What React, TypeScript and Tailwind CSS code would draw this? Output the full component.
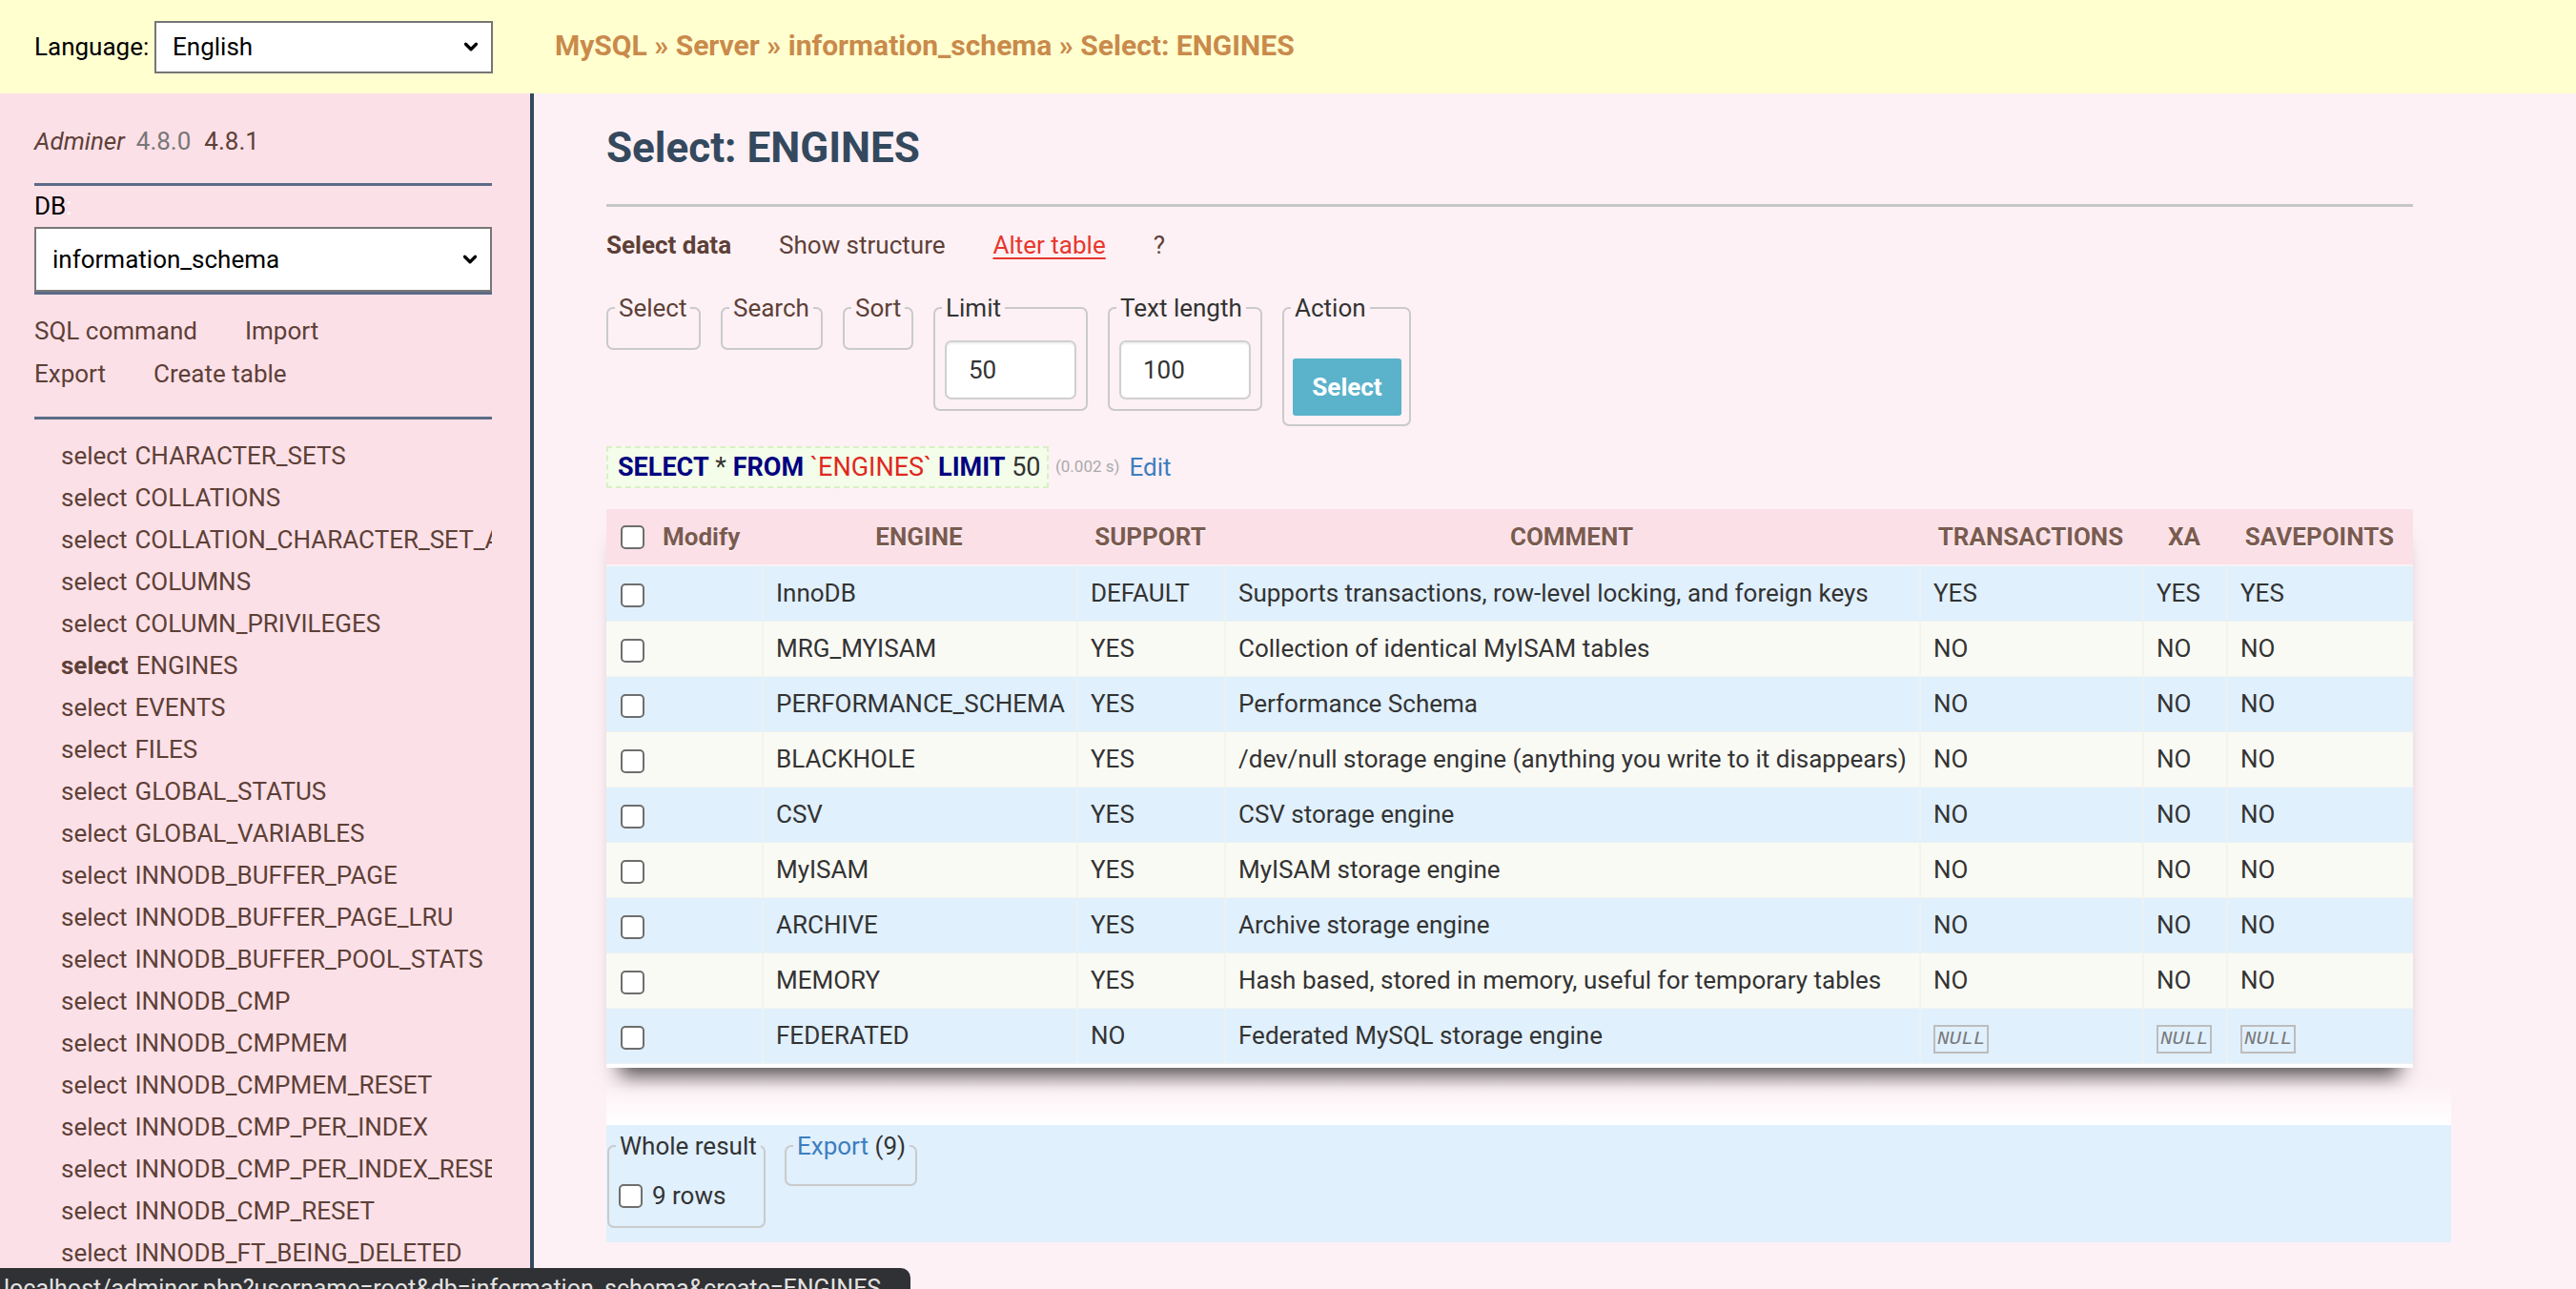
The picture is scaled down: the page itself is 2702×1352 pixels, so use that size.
import { ChevronDown } from 'lucide-react'

const tables = [
  'CHARACTER_SETS', 'COLLATIONS', 'COLLATION_CHARACTER_SET_APPLICABILITY', 'COLUMNS', 'COLUMN_PRIVILEGES',
  'ENGINES', 'EVENTS', 'FILES', 'GLOBAL_STATUS', 'GLOBAL_VARIABLES', 'INNODB_BUFFER_PAGE',
  'INNODB_BUFFER_PAGE_LRU', 'INNODB_BUFFER_POOL_STATS', 'INNODB_CMP', 'INNODB_CMPMEM',
  'INNODB_CMPMEM_RESET', 'INNODB_CMP_PER_INDEX', 'INNODB_CMP_PER_INDEX_RESET', 'INNODB_CMP_RESET',
  'INNODB_FT_BEING_DELETED', 'INNODB_FT_CONFIG', 'INNODB_FT_DEFAULT_STOPWORD',
]

type Row = [string, string, string, string | null, string | null, string | null]

const rows: Row[] = [
  ['InnoDB', 'DEFAULT', 'Supports transactions, row-level locking, and foreign keys', 'YES', 'YES', 'YES'],
  ['MRG_MYISAM', 'YES', 'Collection of identical MyISAM tables', 'NO', 'NO', 'NO'],
  ['PERFORMANCE_SCHEMA', 'YES', 'Performance Schema', 'NO', 'NO', 'NO'],
  ['BLACKHOLE', 'YES', '/dev/null storage engine (anything you write to it disappears)', 'NO', 'NO', 'NO'],
  ['CSV', 'YES', 'CSV storage engine', 'NO', 'NO', 'NO'],
  ['MyISAM', 'YES', 'MyISAM storage engine', 'NO', 'NO', 'NO'],
  ['ARCHIVE', 'YES', 'Archive storage engine', 'NO', 'NO', 'NO'],
  ['MEMORY', 'YES', 'Hash based, stored in memory, useful for temporary tables', 'NO', 'NO', 'NO'],
  ['FEDERATED', 'NO', 'Federated MySQL storage engine', null, null, null],
]

const cols = ['ENGINE', 'SUPPORT', 'COMMENT', 'TRANSACTIONS', 'XA', 'SAVEPOINTS']

function Checkbox() {
  return <span className="inline-block w-[25px] h-[25px] rounded-[5px] border-2 border-[#6e6e6e] bg-white align-middle shrink-0" />
}

function Box({ legend, className, children }: { legend: React.ReactNode; className: string; children?: React.ReactNode }) {
  return (
    <fieldset className={`border-2 border-[#cacaca] rounded-[7px] ${className}`}>
      <legend className="ml-[7px] px-[4px] leading-[30px]">{legend}</legend>
      {children}
    </fieldset>
  )
}

function Null() {
  return (
    <i className="inline-block border-2 border-[#bdbdbd] px-[2px] font-['Liberation_Mono',monospace] text-[21px] leading-[26px] text-[#7a7a7a]">
      NULL
    </i>
  )
}

export default function App() {
  return (
    <div className="relative w-[2702px] h-[1352px] overflow-hidden bg-[#fdf1f5] font-['Roboto','Liberation_Sans',sans-serif] text-[26px] text-[#333]">
      {/* top bar */}
      <div className="h-[98px] bg-[#ffffd0] flex items-center">
        <span className="ml-[36px] w-[126px] text-black">Language:</span>
        <div className="w-[355px] h-[55px] border-2 border-[#767676] bg-white flex items-center justify-between pl-[17px] pr-[10px] text-black">
          English
          <ChevronDown size={22} strokeWidth={3.5} />
        </div>
        <p className="ml-[65px] mb-[4px] font-bold text-[30px] text-[#c98a4b]">
          MySQL » Server » information_schema » Select: ENGINES
        </p>
      </div>

      <div className="flex h-[1254px]">
        {/* sidebar */}
        <aside className="w-[560px] shrink-0 bg-[#fce0e7] border-r-4 border-[#34495e] pl-[36px] pr-[40px] text-[#5d4037] overflow-hidden">
          <p className="mt-[35px] leading-[30px]">
            <i>Adminer</i>
            <span className="ml-[12px] text-[#777]">4.8.0</span>
            <span className="ml-[14px]">4.8.1</span>
          </p>
          <div className="mt-[29px] border-t-[3px] border-[#5b6b87]" />
          <p className="mt-[6px] leading-[30px] text-black">DB<span className="text-white">:</span></p>
          <div className="mt-[7px] h-[66px] border-2 border-[#777] border-b-0 bg-white flex items-center justify-between pl-[17px] pr-[10px] text-black shadow-[0_2px_0_#777,0_5px_0_#5b6b87]">
            information_schema
            <ChevronDown size={22} strokeWidth={3.5} />
          </div>
          <div className="mt-[21px] leading-[45px]">
            <p><span>SQL command</span><span className="ml-[50px]">Import</span></p>
            <p><span>Export</span><span className="ml-[50px]">Create table</span></p>
          </div>
          <div className="mt-[22px] border-t-[3px] border-[#5b6b87]" />
          <ul className="mt-[16px] pl-[28px]">
            {tables.map(t => (
              <li key={t} className="leading-[44px] whitespace-nowrap overflow-hidden">
                <span className={t === 'ENGINES' ? 'font-bold' : ''}>select</span>
                <span className="ml-[8px]">{t}</span>
              </li>
            ))}
          </ul>
        </aside>

        {/* main */}
        <main className="flex-1 pl-[76px] pr-[171px]">
          <h2 className="mt-[33px] leading-[48px] text-[44px] font-bold text-[#34495e]">Select: ENGINES</h2>
          <div className="mt-[35px] border-t-[3px] border-[#c6c6c6]" />

          <nav className="mt-[18px] flex gap-[50px] leading-[44px] text-[#5d4037]">
            <span className="font-bold">Select data</span>
            <span>Show structure</span>
            <span className="text-[#e8372c] underline decoration-2 underline-offset-4">Alter table</span>
            <span>?</span>
          </nav>

          <div className="mt-[29px] flex items-start gap-[21px]">
            <Box legend={<span className="text-[#5d4037]">Select</span>} className="w-[99px] h-[59px]" />
            <Box legend={<span className="text-[#5d4037]">Search</span>} className="w-[107px] h-[59px]" />
            <Box legend={<span className="text-[#5d4037]">Sort</span>} className="w-[74px] h-[59px]" />
            <Box legend="Limit" className="w-[162px] h-[123px]">
              <div className="mt-[19px] mx-[10px] h-[62px] rounded-[7px] border-2 border-[#d0d0d0] bg-white shadow-[inset_0_2px_2px_rgba(0,0,0,0.06)] pl-[23px] flex items-center">50</div>
            </Box>
            <Box legend="Text length" className="w-[162px] h-[123px]">
              <div className="mt-[19px] mx-[10px] h-[62px] rounded-[7px] border-2 border-[#d0d0d0] bg-white shadow-[inset_0_2px_2px_rgba(0,0,0,0.06)] pl-[23px] flex items-center">100</div>
            </Box>
            <Box legend="Action" className="w-[135px] h-[139px]">
              <div className="mt-[38px] ml-[9px] w-[114px] h-[60px] rounded-[3px] bg-[#5bb2cb] text-white font-bold flex items-center justify-center">Select</div>
            </Box>
          </div>

          <div className="mt-[21px] flex items-center">
            <code className="h-[44px] w-[464px] border-2 border-dashed border-[#d9efc4] bg-[#f3fde9] pl-[10px] flex items-center font-['Roboto',sans-serif] text-[27px] text-[#333]">
              <b className="text-[#000080]">SELECT</b>&nbsp;*&nbsp;<b className="text-[#000080]">FROM</b>&nbsp;<span className="text-[#e0281f]">`ENGINES`</span>&nbsp;<b className="text-[#000080]">LIMIT</b>&nbsp;50
            </code>
            <span className="ml-[7px] text-[17px] text-[#aaa]">(0.002 s)</span>
            <span className="ml-[10px] text-[#3d7ebf]">Edit</span>
          </div>

          <div className="mt-[22px] shadow-[0_22px_20px_-14px_rgba(0,0,0,0.7)] border-b-4 border-white">
            <table className="w-full table-fixed border-separate border-spacing-0">
              <colgroup>
                <col className="w-[163px]" />
                <col className="w-[330px]" />
                <col className="w-[155px]" />
                <col className="w-[729px]" />
                <col className="w-[234px]" />
                <col className="w-[88px]" />
                <col className="w-[196px]" />
              </colgroup>
              <thead>
                <tr className="h-[60px] bg-[#fce0e7] text-[#7a5b50] font-bold [text-shadow:0_1px_1px_#fff]">
                  <th className="border-b-2 border-[#f7f3f4] pl-[15px] text-left">
                    <span className="flex items-center gap-[19px]"><Checkbox />Modify</span>
                  </th>
                  {cols.map(c => (
                    <th key={c} className="border-b-2 border-[#f7f3f4] text-center font-bold">{c}</th>
                  ))}
                </tr>
              </thead>
              <tbody>
                {rows.map((r, i) => (
                  <tr key={r[0]} className={`h-[58px] ${i % 2 === 0 ? 'bg-[#e0f0fd]' : 'bg-[#fafaf5]'}`}>
                    <td className="pl-[15px] border-b border-[#f1f1ec]/70"><Checkbox /></td>
                    {r.map((v, j) => (
                      <td key={j} className="px-[13px] border-l-2 border-b border-[#f1f1ec]/70 whitespace-nowrap">
                        {v === null ? <Null /> : v}
                      </td>
                    ))}
                  </tr>
                ))}
              </tbody>
            </table>
          </div>

          {/* footer */}
          <div className="mt-[20px] mr-[-40px]">
            <div className="h-[40px] bg-linear-to-b from-white/10 to-white" />
            <div className="h-[123px] bg-[#e0f0fd] pt-[7px] flex items-start gap-[20px]">
              <Box legend="Whole result" className="ml-[1px] w-[166px] h-[101px]">
                <label className="mt-[18px] ml-[10px] flex items-center gap-[10px]">
                  <Checkbox />9 rows
                </label>
              </Box>
              <Box legend={<span><span className="text-[#3d7ebf]">Export</span> (9)</span>} className="w-[139px] h-[57px]" />
            </div>
          </div>
        </main>
      </div>

      {/* browser status bubble */}
      <div className="absolute left-0 bottom-0 w-[955px] h-[22px] bg-[#303134] rounded-tr-[10px] overflow-hidden pl-[4px] pt-[7px]">
        <p className="leading-[30px] text-[25px] text-[#e3e3e3] whitespace-nowrap">
          localhost/adminer.php?username=root&amp;db=information_schema&amp;create=ENGINES
        </p>
      </div>
    </div>
  )
}
